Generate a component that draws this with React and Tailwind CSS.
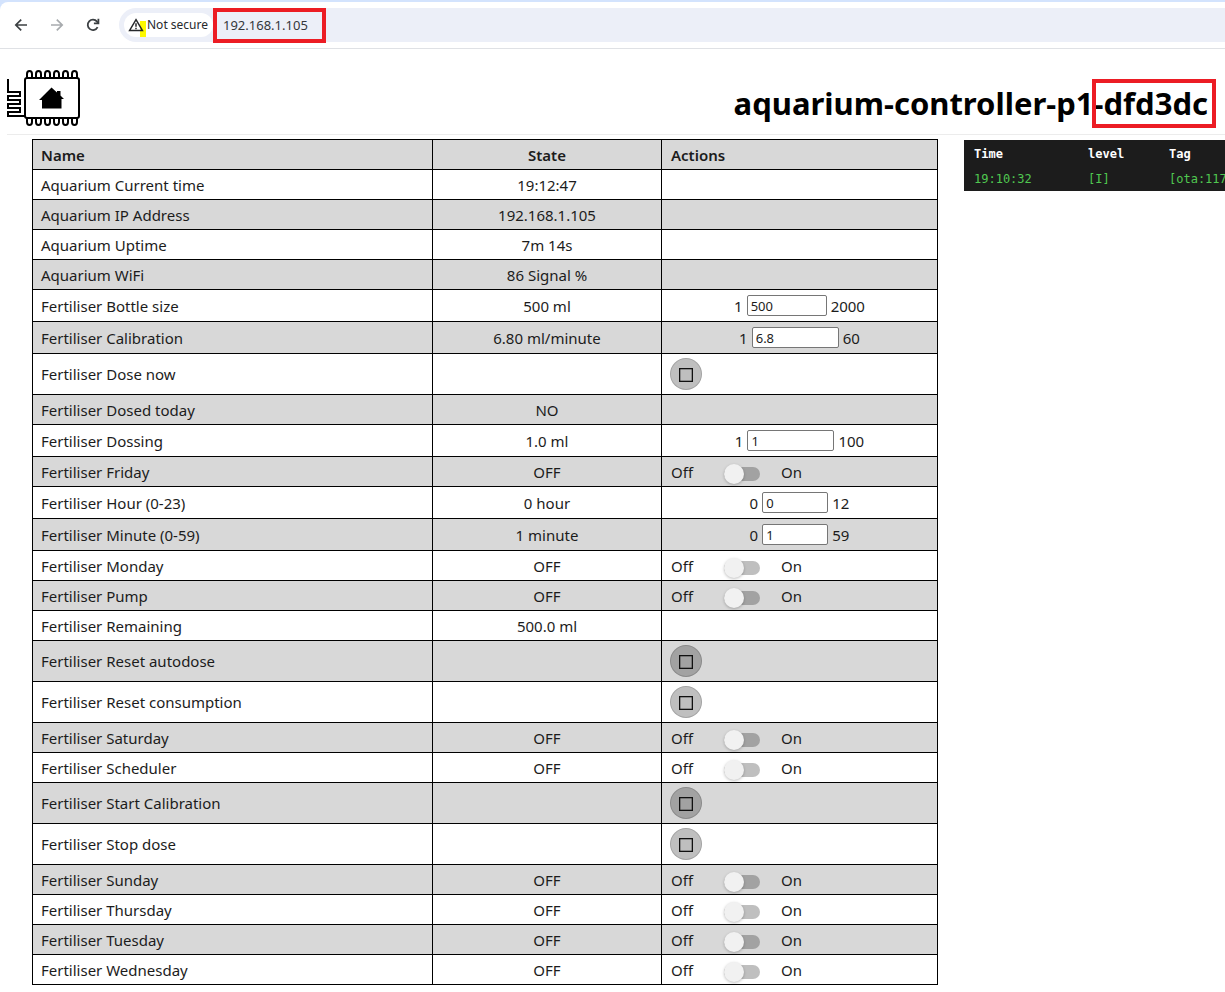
import { useState } from "react";

const rows = [
  { name: "Aquarium Current time", state: "19:12:47" },
  { name: "Aquarium IP Address", state: "192.168.1.105" },
  { name: "Aquarium Uptime", state: "7m 14s" },
  { name: "Aquarium WiFi", state: "86 Signal %" },
  { name: "Fertiliser Bottle size", state: "500 ml", kind: "number", min: 1, max: 2000, value: "500", size: "w-20" },
  { name: "Fertiliser Calibration", state: "6.80 ml/minute", kind: "number", min: 1, max: 60, value: "6.8", size: "w-[87px]" },
  { name: "Fertiliser Dose now", state: "", kind: "button" },
  { name: "Fertiliser Dosed today", state: "NO" },
  { name: "Fertiliser Dossing", state: "1.0 ml", kind: "number", min: 1, max: 100, value: "1", size: "w-[87px]" },
  { name: "Fertiliser Friday", state: "OFF", kind: "switch" },
  { name: "Fertiliser Hour (0-23)", state: "0 hour", kind: "number", min: 0, max: 12, value: "0", size: "w-[66px]" },
  { name: "Fertiliser Minute (0-59)", state: "1 minute", kind: "number", min: 0, max: 59, value: "1", size: "w-[66px]" },
  { name: "Fertiliser Monday", state: "OFF", kind: "switch" },
  { name: "Fertiliser Pump", state: "OFF", kind: "switch" },
  { name: "Fertiliser Remaining", state: "500.0 ml" },
  { name: "Fertiliser Reset autodose", state: "", kind: "button" },
  { name: "Fertiliser Reset consumption", state: "", kind: "button" },
  { name: "Fertiliser Saturday", state: "OFF", kind: "switch" },
  { name: "Fertiliser Scheduler", state: "OFF", kind: "switch" },
  { name: "Fertiliser Start Calibration", state: "", kind: "button" },
  { name: "Fertiliser Stop dose", state: "", kind: "button" },
  { name: "Fertiliser Sunday", state: "OFF", kind: "switch" },
  { name: "Fertiliser Thursday", state: "OFF", kind: "switch" },
  { name: "Fertiliser Tuesday", state: "OFF", kind: "switch" },
  { name: "Fertiliser Wednesday", state: "OFF", kind: "switch" },
];

const rowHeights = { number: "h-8", button: "h-[41px]", switch: "h-[30px]" };

function BrowserBar() {
  const [address, setAddress] = useState("192.168.1.105");
  return (
    <div className="bg-[#d3e3fd] pt-[2px]">
      <div className="flex h-[47px] items-center rounded-tl-lg border-b border-[#dfe1e5] bg-white pl-[13px]">
        <div className="flex gap-5">
          <button type="button" aria-label="Back" className="text-[#3c4043]">
            <svg viewBox="0 0 16 16" className="size-4" fill="none" stroke="currentColor" strokeWidth="1.7">
              <path d="M14 8H3M8.2 2.6 2.8 8l5.4 5.4" />
            </svg>
          </button>
          <button type="button" aria-label="Forward" className="text-[#a8abae]">
            <svg viewBox="0 0 16 16" className="size-4" fill="none" stroke="currentColor" strokeWidth="1.7">
              <path d="M2 8h11M7.8 2.6 13.2 8l-5.4 5.4" />
            </svg>
          </button>
          <button type="button" aria-label="Reload" className="text-[#3c4043]">
            <svg viewBox="0 0 16 16" className="size-4" fill="none" stroke="currentColor" strokeWidth="1.8">
              <path d="M12.6 10.2A5.2 5.2 0 1 1 12 4.6L13.4 6" />
              <path d="M13.4 1.8V6.3H8.9" />
            </svg>
          </button>
        </div>
        <div className="ml-[18px] flex h-[34px] grow items-center rounded-l-full bg-[#eceff8] pl-[5px]">
          <button
            type="button"
            className="flex h-6 w-[89px] items-center gap-[3px] rounded-full bg-white pl-1 font-['Noto_Sans'] text-xs whitespace-nowrap text-[#27292c]"
          >
            <span className="relative">
              <span className="absolute top-1 left-3 h-4 w-[6px] bg-[#fdf900]" />
              <svg viewBox="0 0 16 16" className="relative size-4" fill="none" stroke="currentColor" strokeWidth="1.5">
                <path d="M8 2.6 14.4 13.4H1.6Z" />
                <path d="M8 6.2v3.6M8 10.7v1.5" />
              </svg>
            </span>
            Not secure
          </button>
          <input
            aria-label="Address"
            value={address}
            onChange={(e) => setAddress(e.target.value)}
            className="h-[35px] w-[113px] border-4 border-[#ec1c24] bg-transparent px-[6px] font-['Noto_Sans'] text-[13px] text-[#34373b] outline-none"
          />
        </div>
      </div>
    </div>
  );
}

function Logo() {
  return (
    <svg viewBox="0 0 74 58" className="h-[58px] w-[74px]" fill="none" stroke="#000" strokeWidth="2" aria-hidden="true">
      <rect x="18" y="8" width="54" height="40" rx="2" />
      <path d="M20 8V4a2.500 3 0 0 1 5 0V8M29 8V4a2.500 3 0 0 1 5 0V8M38 8V4a2.500 3 0 0 1 5 0V8M47 8V4a2.500 3 0 0 1 5 0V8M56 8V4a2.500 3 0 0 1 5 0V8M65 8V4a2.500 3 0 0 1 5 0V8" />
      <path d="M20 48v4a2.500 3 0 0 0 5 0V48M29 48v4a2.500 3 0 0 0 5 0V48M38 48v4a2.500 3 0 0 0 5 0V48M47 48v4a2.500 3 0 0 0 5 0V48M56 48v4a2.500 3 0 0 0 5 0V48M65 48v4a2.500 3 0 0 0 5 0V48" />
      <path d="M1 9v13h12v4H1v4h12v4H1v4h12v4H1v4h17" />
      <path
        d="M44.500 17.500 50 22.500v-1.500h3.500v4.500L57 29h-2.500v9.500H35V30h-3Z"
        fill="#000"
        stroke="none"
      />
    </svg>
  );
}

function Action({ row }) {
  if (row.kind === "number") {
    return (
      <label className="flex items-center justify-center gap-1">
        <span>{row.min}</span>
        <input
          type="number"
          aria-label={row.name}
          min={row.min}
          max={row.max}
          step="any"
          defaultValue={row.value}
          className={`h-[21px] rounded-xs border border-[#767676] bg-white px-[3px] text-[13px] ${row.size}`}
        />
        <span>{row.max}</span>
      </label>
    );
  }
  if (row.kind === "button") {
    return (
      <button
        type="button"
        aria-label={row.name}
        className="flex size-8 items-center justify-center rounded-full border border-black/15 bg-black/25 pt-[2px]"
      >
        <svg viewBox="0 0 14 14" className="size-[14px]" fill="none" stroke="#111" strokeWidth="1.300">
          <rect x="0.650" y="0.650" width="12.700" height="12.700" />
        </svg>
      </button>
    );
  }
  if (row.kind === "switch") {
    return (
      <label className="grid grid-cols-[53px_57px_auto] items-center">
        <span>Off</span>
        <span className="flex pt-1">
          <input
            type="checkbox"
            role="switch"
            aria-label={row.name}
            className="flex h-[14px] w-9 appearance-none items-center rounded-full bg-black/25 before:size-5 before:shrink-0 before:rounded-full before:bg-[#f1f1f1] before:shadow-[0_1px_3px_rgba(0,0,0,0.25)] checked:before:translate-x-4"
          />
        </span>
        <span>On</span>
      </label>
    );
  }
  return null;
}

export default function App() {
  return (
    <div className="min-h-screen overflow-hidden bg-white font-['Noto_Sans',sans-serif] text-[15px] leading-5 text-[#1c1c1c]">
      <BrowserBar />
      <header className="ml-[7px] flex h-[86px] items-center justify-between border-b border-[#ececec] pr-[17px]">
        <div className="pt-[14px]">
          <Logo />
        </div>
        <h1 className="pt-[22px] text-[31px] leading-10 font-bold text-black">
          aquarium-controller-p1
          <span className="relative">
            -dfd3dc
            <span className="absolute -top-[3px] -right-2 h-[49px] w-[124px] border-4 border-[#ec1c24]" />
          </span>
        </h1>
      </header>
      <main className="flex items-start gap-[26px] pt-1 pl-8">
        <table className="min-w-0 flex-1 table-fixed border-collapse border border-black">
          <colgroup>
            <col className="w-[400px]" />
            <col className="w-[229px]" />
            <col />
          </colgroup>
          <thead>
            <tr className="h-[30px] bg-[#d8d8d8]">
              <th className="border border-black px-2 py-0 text-left font-semibold">Name</th>
              <th className="border border-black px-2 py-0 text-center font-semibold">State</th>
              <th className="border border-black px-[9px] py-0 text-left font-semibold">Actions</th>
            </tr>
          </thead>
          <tbody>
            {rows.map((row) => (
              <tr key={row.name} className={`even:bg-[#d8d8d8] ${rowHeights[row.kind] || "h-[30px]"}`}>
                <td className="border border-black px-2 py-0">{row.name}</td>
                <td className="border border-black px-2 py-0 text-center">{row.state}</td>
                <td className={`border border-black py-0 ${row.kind === "button" ? "px-2" : "px-[9px]"}`}>
                  <Action row={row} />
                </td>
              </tr>
            ))}
          </tbody>
        </table>
        <section aria-label="Log" className="mt-px w-[261px] shrink-0 overflow-hidden bg-[#1c1c1c] pl-[10px]">
          <table className="w-full table-fixed text-left font-['DejaVu_Sans_Mono',monospace] text-xs whitespace-nowrap">
            <colgroup>
              <col className="w-[114px]" />
              <col className="w-[81px]" />
              <col />
            </colgroup>
            <thead>
              <tr className="h-[27px] text-white">
                <th className="p-0">Time</th>
                <th className="p-0">level</th>
                <th className="p-0">Tag</th>
              </tr>
            </thead>
            <tbody>
              <tr className="h-6 text-[#50c850]">
                <td className="p-0">19:10:32</td>
                <td className="p-0">[I]</td>
                <td className="p-0">[ota:117</td>
              </tr>
            </tbody>
          </table>
        </section>
      </main>
    </div>
  );
}
